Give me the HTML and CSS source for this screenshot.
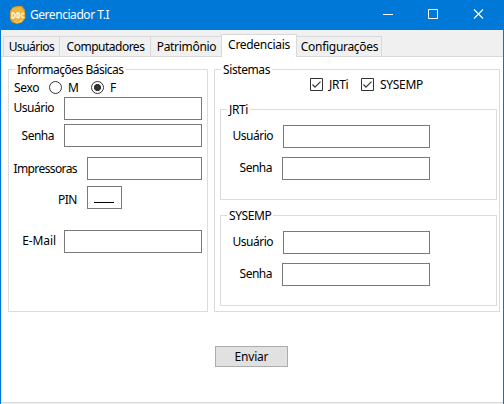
FILE: index.html
```
<!DOCTYPE html>
<html lang="pt-BR">
<head>
<meta charset="utf-8">
<title>Gerenciador T.I</title>
<link rel="stylesheet" href="styles.css">
</head>
<body>
<div class="window">
  <header class="titlebar">
    <svg class="logo" width="18" height="19" viewBox="0 0 18 19">
      <path d="M4 1 8 0h5l3 4 .5 8-3.500 4.500L8 18l-5-1.500L1 13V5z" fill="#d99a22"/>
      <path d="M4 2 12 1l3 4v7l-4 4-7-1.500L2 12V6z" fill="#efb53f"/>
      <path d="m3 14 5.500 2 6-3-2 3-5 1z" fill="#f8d477"/>
      <path d="M3 7v5h1.500L6 10.500v-2L4.500 7zm5 0h2v4.500H8zM15.500 7.500h-2L12 9.500l1.500 2h2" fill="none" stroke="#fff5df" stroke-width="1.400"/>
    </svg>
    <span class="title">Gerenciador T.I</span>
    <svg class="controls" width="120" height="12" viewBox="0 0 120 12" fill="none" stroke="#fff">
      <path d="M0 6.500h10M45.500 1.500h9v9h-9z"/>
      <path d="m91 1.500 9 9m0-9-9 9" stroke-width="1.1"/>
    </svg>
  </header>
  <nav class="tabs">
    <div class="tab t1"><span>Usuários</span></div>
    <div class="tab t2"><span>Computadores</span></div>
    <div class="tab t3"><span>Patrimônio</span></div>
    <div class="tab t4 selected"><span>Credenciais</span></div>
    <div class="tab t5"><span>Configurações</span></div>
  </nav>
  <main class="pane">
    <div class="groups">
      <fieldset class="basic">
        <legend class="wide">Informações Básicas</legend>
        <div class="sex">
          <span class="sexlabel">Sexo</span>
          <i class="radio"></i><span class="m">M</span>
          <i class="radio on"></i><span>F</span>
        </div>
        <div class="row user"><label>Usuário</label><div class="input"></div></div>
        <div class="row pass"><label>Senha</label><div class="input"></div></div>
        <div class="row printers"><label>Impressoras</label><div class="input"></div></div>
        <div class="row pin"><label>PIN</label><div class="input"><span class="mask"></span></div></div>
        <div class="row mail"><label>E-Mail</label><div class="input"></div></div>
      </fieldset>
      <fieldset class="systems">
        <legend>Sistemas</legend>
        <div class="checks">
          <svg width="13" height="13" viewBox="0 0 13 13" fill="none" stroke="#333"><path d="M.5 .5h12v12H.5z"/><path d="m2.500 6.500 2.500 2.700 5.500-5.500" stroke-width="1.200"/></svg>
          <span class="cj">JRTi</span>
          <svg width="13" height="13" viewBox="0 0 13 13" fill="none" stroke="#333"><path d="M.5 .5h12v12H.5z"/><path d="m2.500 6.500 2.500 2.700 5.500-5.500" stroke-width="1.200"/></svg>
          <span>SYSEMP</span>
        </div>
        <fieldset class="system">
          <legend>JRTi</legend>
          <div class="row su"><label>Usuário</label><div class="input"></div></div>
          <div class="row sp"><label>Senha</label><div class="input"></div></div>
        </fieldset>
        <fieldset class="system">
          <legend>SYSEMP</legend>
          <div class="row su"><label>Usuário</label><div class="input"></div></div>
          <div class="row sp"><label>Senha</label><div class="input"></div></div>
        </fieldset>
      </fieldset>
    </div>
    <button class="send">Enviar</button>
  </main>
</div>
</body>
</html>
```
FILE: styles.css
```
* { box-sizing: border-box; }
body {
  margin: 0;
  overflow: hidden;
  font: 12px/17px "Noto Sans", "Open Sans", sans-serif;
  letter-spacing: -0.3px;
  color: #000;
}
.window {
  width: 504px;
  height: 404px;
  background: #f0f0f0;
  border: solid #0078d7;
  border-width: 0 1px;
}
.titlebar {
  height: 30px;
  display: flex;
  align-items: center;
  background: #0078d7;
  color: #fff;
  padding-left: 8px;
}
.title { margin: -1px 0 0 3px; width: 90px; white-space: nowrap; letter-spacing: -0.45px; }
.controls { margin: -2px 0 0 263px; }
.tabs {
  height: 27px;
  display: flex;
  align-items: flex-end;
  padding-left: 2px;
  border-bottom: 1px solid #d9d9d9;
}
.tab {
  height: 20px;
  border: 1px solid #d9d9d9;
  border-width: 1px 1px 0 0;
  padding-top: 1px;
  text-align: center;
  white-space: nowrap;
}
.t1 { width: 57px; border-left-width: 1px; letter-spacing: -0.5px; }
.t2 { width: 91px; letter-spacing: -0.5px; padding-left: 1px; }
.t3 { width: 70px; border-right: 0; padding-left: 1px; }
.t4 { width: 76px; }
.t5 { width: 85px; padding-left: 1px; }
.tab.selected {
  height: 23px;
  margin-bottom: -1px;
  background: #fff;
  border-left-width: 1px;
}
.pane {
  height: 346px;
  background: #fff;
  border-left: 1px solid #e5e5e5;
  border-bottom: 1px solid #d9d9d9;
  padding: 4px 0 0 6px;
}
.groups { display: flex; gap: 6px; height: 251px; }
fieldset {
  margin: 0;
  padding: 0;
  min-width: 0;
  border: 1px solid #dcdcdc;
}
legend {
  height: 17px;
  margin-left: 6px;
  padding: 0 2px;
  white-space: nowrap;
  letter-spacing: -0.4px;
}
.wide { letter-spacing: -0.5px; }
.basic { width: 200px; height: 251px; }
.systems { width: 286px; height: 251px; }
.sex { display: flex; height: 19px; padding-left: 5px; align-items: center; }
.sexlabel { width: 35px; }
.radio {
  width: 13px;
  height: 13px;
  border: 1px solid #333;
  border-radius: 50%;
  margin-right: 6px;
}
.radio.on { background: radial-gradient(circle, #333 3.2px, #fff 3.900px); }
.m { width: 23px; }
.row { display: flex; height: 23px; }
.input { height: 23px; border: 1px solid #7a7a7a; background: #fff; }
label { text-align: right; padding-top: 3px; white-space: nowrap; letter-spacing: -0.5px; }
.basic label { width: 45px; }
.basic .input { width: 138px; margin-left: 10px; }
.user label { padding-top: 2px; }
.pass { margin-top: 4px; }
.printers { margin-top: 10px; }
.basic .printers label, .basic .pin label { width: 68px; }
.basic .printers label { letter-spacing: -0.6px; }
.basic .printers .input { width: 115px; }
.pin { margin-top: 6px; }
.pin label { padding-top: 5px; }
.basic .pin .input { width: 35px; padding: 15px 0 0 6px; }
.mask { display: block; width: 20px; height: 1px; background: #000; }
.mail { margin-top: 21px; }
.basic .mail label { width: 47px; letter-spacing: -0.1px; padding-top: 2px; }
.basic .mail .input { margin-left: 8px; }
.checks { display: flex; height: 23px; padding: 0 0 0 95px; }
.checks span { margin: -2px 0 0 6px; }
.checks .cj { width: 32px; }
.system { width: 277px; height: 99px; margin-left: 5px; }
.system + .system { margin-top: 7px; }
.system .row { margin-bottom: 9px; }
.system .su { margin-top: 7px; }
.system label { padding-top: 2px; }
.su label { width: 52px; }
.su .input { width: 147px; margin-left: 10px; }
.sp label { width: 51px; }
.sp .input { width: 148px; margin-left: 10px; }
.send {
  display: block;
  width: 73px;
  height: 21px;
  margin: 34px 0 0 207px;
  padding: 0;
  border: 1px solid #adadad;
  border-radius: 0;
  background: #e1e1e1;
  font: inherit;
  letter-spacing: -0.2px;
  color: #000;
}
```
